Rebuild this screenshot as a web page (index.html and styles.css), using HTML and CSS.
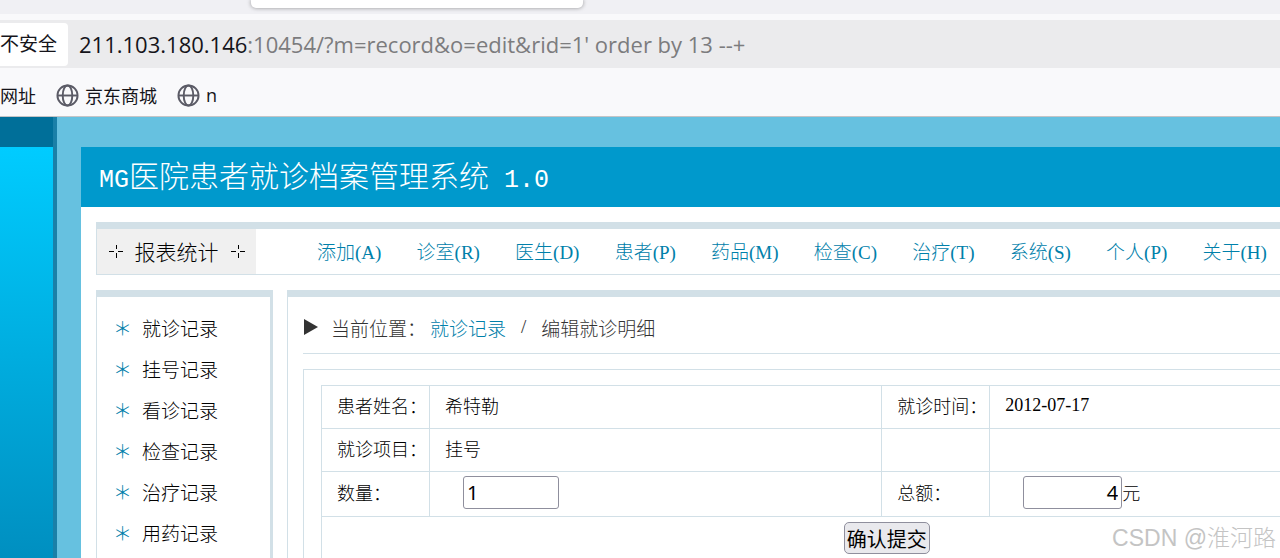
FILE: index.html
```
<!DOCTYPE html>
<html lang="zh-CN">
<head>
    <meta charset="UTF-8">
    <meta name="viewport" content="width=device-width, initial-scale=1.0">
    <title>MG医院患者就诊档案管理系统 1.0</title>
    <link rel="stylesheet" href="styles.css">
</head>
<body>
    <div class="browser">
        <div class="tab-strip"><div class="active-tab"></div></div>
        <div class="address-bar">
            <span class="identity">不安全</span>
            <span class="url"><b>211.103.180.146</b>:10454/?m=record&amp;o=edit&amp;rid=1' order by 13 --+</span>
        </div>
        <div class="bookmarks">
            <a href="#">网址</a>
            <a href="#">
                <svg class="globe" viewBox="0 0 24 24"><circle cx="12" cy="12" r="10.5"/><ellipse cx="12" cy="12" rx="5" ry="10.5"/><path d="M1.5 12h21"/></svg>
                京东商城
            </a>
            <a href="#">
                <svg class="globe" viewBox="0 0 24 24"><circle cx="12" cy="12" r="10.5"/><ellipse cx="12" cy="12" rx="5" ry="10.5"/><path d="M1.5 12h21"/></svg>
                n
            </a>
        </div>
    </div>

    <div class="page">
        <div class="rail"><div class="rail-body"></div></div>
        <div class="main">
            <h1><span class="latin">MG</span>医院患者就诊档案管理系统<span class="latin"> 1.0</span></h1>
            <div class="nav">
                <div class="nav-title">
                    <svg class="cross" viewBox="0 0 14 14"><path d="M0 7.5h5M9 7.5h5M7.5 1v4M7.5 9v5"/></svg>
                    <span>报表统计</span>
                    <svg class="cross" viewBox="0 0 14 14"><path d="M0 7.5h5M9 7.5h5M7.5 1v4M7.5 9v5"/></svg>
                </div>
                <div class="nav-links">
                    <a href="#">添加(A)</a>
                    <a href="#">诊室(R)</a>
                    <a href="#">医生(D)</a>
                    <a href="#">患者(P)</a>
                    <a href="#">药品(M)</a>
                    <a href="#">检查(C)</a>
                    <a href="#">治疗(T)</a>
                    <a href="#">系统(S)</a>
                    <a href="#">个人(P)</a>
                    <a href="#">关于(H)</a>
                </div>
            </div>
            <div class="columns">
                <ul class="sidebar">
                    <li><a href="#">就诊记录</a></li>
                    <li><a href="#">挂号记录</a></li>
                    <li><a href="#">看诊记录</a></li>
                    <li><a href="#">检查记录</a></li>
                    <li><a href="#">治疗记录</a></li>
                    <li><a href="#">用药记录</a></li>
                </ul>
                <div class="content">
                    <div class="breadcrumb">
                        <svg class="arrow" viewBox="0 0 16 16"><path d="M1 0l14 8-14 8z"/></svg>
                        <span>当前位置：</span>
                        <a href="#">就诊记录</a>
                        <span class="slash">/</span>
                        <span>编辑就诊明细</span>
                    </div>
                    <form class="form-box">
                        <table class="record">
                            <colgroup>
                                <col class="col-label">
                                <col class="col-value">
                                <col class="col-label">
                                <col>
                            </colgroup>
                            <tr>
                                <th>患者姓名：</th>
                                <td>希特勒</td>
                                <th>就诊时间：</th>
                                <td>2012-07-17</td>
                            </tr>
                            <tr>
                                <th>就诊项目：</th>
                                <td>挂号</td>
                                <th></th>
                                <td></td>
                            </tr>
                            <tr class="inputs">
                                <th><label for="count">数量：</label></th>
                                <td><input type="text" id="count" value="1"></td>
                                <th><label for="total">总额：</label></th>
                                <td><input type="text" id="total" class="total" value="4">元</td>
                            </tr>
                            <tr>
                                <td class="submit" colspan="4"><button type="submit">确认提交</button></td>
                            </tr>
                        </table>
                    </form>
                </div>
            </div>
        </div>
    </div>
    <div class="watermark">CSDN @淮河路</div>
</body>
</html>
```
FILE: styles.css
```
* {
    box-sizing: border-box;
}

body {
    margin: 0;
    height: 100vh;
    display: flex;
    flex-direction: column;
    overflow: hidden;
    position: relative;
    font-family: "Liberation Serif", "Noto Sans CJK SC", serif;
    font-weight: 300;
    color: #000;
}

a {
    color: #0080aa;
    text-decoration: none;
}

/* browser bars */
.browser {
    flex: none;
    background: #f9f9fb;
    border-bottom: 1px solid #c4c4c6;
    font-family: "Open Sans", "Noto Sans CJK SC", sans-serif;
    font-weight: 400;
}

.tab-strip {
    height: 14px;
    background: #f0f0f4;
    padding-left: 251px;
}

.active-tab {
    width: 332px;
    height: 8px;
    background: #fff;
    border-radius: 0 0 5px 5px;
    box-shadow: 0 0 4px rgba(0, 0, 0, 0.4);
}

.address-bar {
    height: 48px;
    margin-top: 6px;
    background: #ebebed;
    display: flex;
    align-items: center;
    gap: 11px;
    font-size: 22px;
    white-space: nowrap;
}

.identity {
    height: 43px;
    padding-right: 11px;
    background: #fff;
    border-radius: 0 4px 4px 0;
    line-height: 43px;
    color: #15141a;
    font-size: 19px;
}

.url {
    color: #7c7c7e;
}

.url b {
    font-weight: 400;
    color: #15141a;
}

.bookmarks {
    height: 48px;
    padding-top: 6px;
    display: flex;
    align-items: center;
    gap: 20px;
    font-size: 18px;
}

.bookmarks a {
    display: flex;
    align-items: center;
    gap: 6px;
    color: #15141a;
}

.globe {
    width: 23px;
    height: 23px;
    fill: none;
    stroke: #5b5b66;
    stroke-width: 2;
}

/* page */
.page {
    flex: 1;
    min-height: 0;
    display: flex;
    background: #66c1e0;
}

.rail {
    flex: none;
    width: 57px;
    padding-top: 30px;
    border-right: 4px solid #1a80a8;
    background: #006f99;
}

.rail-body {
    height: 100%;
    background: linear-gradient(#00ccff, #008fc0);
}

.main {
    flex: 1;
    min-width: 0;
    margin: 30px 0 0 24px;
    background: #fff;
    display: flex;
    flex-direction: column;
}

h1 {
    margin: 0;
    height: 60px;
    flex: none;
    line-height: 60px;
    padding-left: 18px;
    background: #0099cc;
    color: #fff;
    font-size: 30px;
    font-weight: 300;
}

/* half the width of a Chinese character */
.latin {
    font-family: "Liberation Mono", monospace;
    font-size: 25px;
}

.nav {
    flex: none;
    height: 53px;
    margin: 15px 0 0 15px;
    display: flex;
    border: 1px solid #d2e0e7;
    border-top-width: 7px;
    border-right: 0;
}

.nav-title {
    width: 159px;
    padding-bottom: 2px;
    background: #f0f0f0;
    display: flex;
    align-items: center;
    justify-content: center;
    gap: 12px;
    font-size: 21px;
}

.cross {
    width: 14px;
    height: 14px;
    stroke: #000;
}

.nav-links {
    flex: 1;
    display: flex;
    align-items: center;
    justify-content: space-between;
    padding: 0 13px 3px 61px;
    font-size: 19px;
    white-space: nowrap;
}

.columns {
    flex: 1;
    min-height: 0;
    margin: 15px 0 0 15px;
    display: flex;
    gap: 14px;
}

.sidebar {
    flex: none;
    width: 177px;
    margin: 0;
    padding: 12px 0 0 16px;
    list-style: none;
    border: solid #d2e0e7;
    border-width: 7px 3px 0 1px;
    font-size: 19px;
    line-height: 41px;
    overflow: hidden;
}

.sidebar li {
    display: flex;
}

.sidebar li::before {
    content: "＊";
    width: 29px;
    color: #0080aa;
}

.sidebar a {
    color: #000;
}

.content {
    flex: 1;
    min-width: 0;
    padding-left: 15px;
    border-top: 7px solid #d2e0e7;
    border-left: 1px solid #d2e0e7;
    display: flex;
    flex-direction: column;
}

.breadcrumb {
    flex: none;
    height: 57px;
    padding-top: 4px;
    border-bottom: 1px solid #d2e0e7;
    display: flex;
    align-items: center;
    color: #333;
    font-size: 19px;
}

.breadcrumb a {
    margin-left: 4px;
}

.arrow {
    width: 16px;
    height: 16px;
    margin-right: 12px;
    fill: #333;
}

.slash {
    margin: 0 15px;
}

.form-box {
    flex: 1;
    min-height: 0;
    margin-top: 15px;
    padding: 15px 0 0 17px;
    border: solid #d2e0e7;
    border-width: 1px 0 0 1px;
    overflow: hidden;
}

/* wider than the window, the right end is scrolled out */
.record {
    width: 118%;
    table-layout: fixed;
    border-collapse: collapse;
    font-size: 18px;
}

.col-label {
    width: 108px;
}

.col-value {
    width: 40%;
}

.record th,
.record td {
    height: 43px;
    padding: 0 0 4px 15px;
    border: 1px solid #d2e0e7;
    font-weight: 300;
    text-align: left;
    white-space: nowrap;
}

.record .inputs td {
    height: 45px;
    padding-left: 33px;
}

.record .submit {
    padding: 0;
    text-align: center;
}

input {
    width: 96px;
    height: 33px;
    padding: 0 3px;
    border: 1px solid #8f8f9d;
    border-radius: 3px;
    font: 400 20px "Noto Sans", sans-serif;
}

.total {
    width: 99px;
    text-align: right;
}

button {
    height: 32px;
    padding: 0 2px;
    border: 1px solid #8f8f9d;
    border-radius: 5px;
    background: #e9e9ed;
    color: #000;
    font: 400 20px "Noto Sans CJK SC", sans-serif;
}

.watermark {
    position: absolute;
    right: 4px;
    bottom: 5px;
    color: #c4c4c4;
    font: 300 23px "Liberation Sans", "Noto Sans CJK SC", sans-serif;
}
```
